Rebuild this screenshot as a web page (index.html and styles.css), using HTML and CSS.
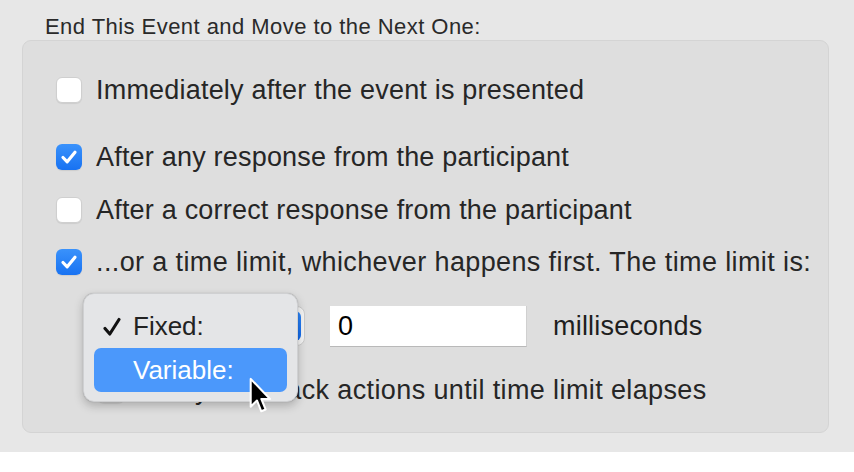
FILE: index.html
```html
<!DOCTYPE html>
<html>
<head>
<meta charset="utf-8">
<link rel="stylesheet" href="styles.css">
</head>
<body>
<div class="window">
  <div class="title">End This Event and Move to the Next One:</div>
  <div class="box">
    <div class="row r1"><span class="cb"></span><span class="label">Immediately after the event is presented</span></div>
    <div class="row r2"><span class="cb on"><svg viewBox="0 0 26 26" width="26" height="26"><path d="M7 13.5 L11.2 17.8 L19 8.2" fill="none" stroke="#fff" stroke-width="3.2" stroke-linecap="round" stroke-linejoin="round"/></svg></span><span class="label">After any response from the participant</span></div>
    <div class="row r3"><span class="cb"></span><span class="label">After a correct response from the participant</span></div>
    <div class="row r4"><span class="cb on"><svg viewBox="0 0 26 26" width="26" height="26"><path d="M7 13.5 L11.2 17.8 L19 8.2" fill="none" stroke="#fff" stroke-width="3.2" stroke-linecap="round" stroke-linejoin="round"/></svg></span><span class="label wide">...or a time limit, whichever happens first. The time limit is:</span></div>
    <div class="row r5">
      <div class="popbtn"><span class="popval">Fixed:</span><span class="arrows"></span></div>
      <div class="field">0</div>
      <span class="label units">milliseconds</span>
    </div>
    <div class="row r6"><span class="cb"></span><span class="label wide">Delay feedback actions until time limit elapses</span></div>

    <div class="menu">
      <div class="item"><svg class="tick" viewBox="0 0 18 20" width="18" height="20"><path d="M2 11.5 L6.8 17 L16 2.5" fill="none" stroke="#111" stroke-width="3.1" stroke-linecap="round" stroke-linejoin="round"/></svg>Fixed:</div>
      <div class="item sel">Variable:</div>
    </div>
    <svg class="cursor" viewBox="0 0 22 34" width="25" height="39"><path d="M1.5 1.5 L1.5 26 L7 20.5 L10.8 30 L14.6 28.4 L10.9 19.2 L18.5 19.2 Z" fill="#000" stroke="#fff" stroke-width="1.8" stroke-linejoin="round"/></svg>
  </div>
</div>
</body>
</html>
```
FILE: styles.css
```css
html, body {
  margin: 0;
  padding: 0;
  background: #ffffff;
}
body {
  font-family: "Liberation Sans", Arial, sans-serif;
  color: #262626;
}
.window {
  height: 452px;
  background: #e7e7e7;
  padding: 0 25px 0 22px;
  box-sizing: border-box;
  display: flex;
  flex-direction: column;
}
.title {
  padding: 15px 0 0 23px;
  height: 25px;
  line-height: 24px;
  font-size: 22px;
  letter-spacing: 0.45px;
  color: #2a2a2a;
}
.box {
  position: relative;
  height: 393px;
  box-sizing: border-box;
  border: 1px solid #d4d4d4;
  border-radius: 9px;
  background: #dedede;
  padding-left: 33px;
  display: flex;
  flex-direction: column;
}
.row {
  display: flex;
  align-items: center;
  height: 40px;
}
.r1 { margin-top: 29px; }
.r2 { margin-top: 27px; }
.r3 { margin-top: 13px; }
.r4 { margin-top: 12px; }
.r5 { margin-top: 22px; height: 44px; }
.r6 { margin-top: 22px; padding-left: 42px; }
.label {
  font-size: 27px;
  letter-spacing: 0.2px;
  color: #262626;
  white-space: nowrap;
}
.label.wide {
  letter-spacing: 0.38px;
}
.cb {
  width: 26px;
  height: 26px;
  box-sizing: border-box;
  border-radius: 6px;
  background: #ffffff;
  border: 1px solid #cfcfcf;
  box-shadow: 0 1px 1px rgba(0,0,0,0.08);
  margin-right: 14px;
  flex: none;
  display: flex;
}
.cb.on {
  border: none;
  background: linear-gradient(#3a92fb, #1872f2);
}
.cb svg { display: block; }
.popbtn {
  margin-left: 40px;
  width: 209px;
  height: 40px;
  box-sizing: border-box;
  border-radius: 8px;
  background: #f4f4f4;
  border: 1px solid #cbcbcb;
  display: flex;
  align-items: center;
  justify-content: space-between;
  padding: 3px;
}
.popval {
  font-size: 26px;
  padding-left: 34px;
}
.arrows {
  width: 30px;
  height: 30px;
  border-radius: 6px;
  background: linear-gradient(#2e87f9, #0f66e8);
}
.field {
  margin-left: 25px;
  width: 197px;
  height: 41px;
  box-sizing: border-box;
  background: #ffffff;
  border-bottom: 1px solid #b9b9b9;
  border-right: 1px solid #d0d0d0;
  font-size: 27px;
  line-height: 40px;
  padding-left: 8px;
  color: #000;
}
.units {
  margin-left: 26px;
  color: #1e1e1e;
}
.menu {
  position: absolute;
  left: 60px;
  top: 252px;
  width: 215px;
  height: 109px;
  box-sizing: border-box;
  border-radius: 11px;
  background: #e4e5e7;
  border: 1px solid #cfd0d2;
  box-shadow: 0 4px 10px rgba(0,0,0,0.22), 0 0 1px rgba(0,0,0,0.25);
  padding: 11px 10px 9px 10px;
  display: flex;
  flex-direction: column;
}
.item {
  position: relative;
  height: 43px;
  line-height: 43px;
  padding-left: 39px;
  font-size: 26px;
  color: #222;
  border-radius: 7px;
}
.item.sel {
  height: 44px;
  line-height: 44px;
  background: #4b98fb;
  color: #ffffff;
}
.tick {
  position: absolute;
  left: 9px;
  top: 12px;
}
.cursor {
  position: absolute;
  left: 226px;
  top: 336px;
}
```
